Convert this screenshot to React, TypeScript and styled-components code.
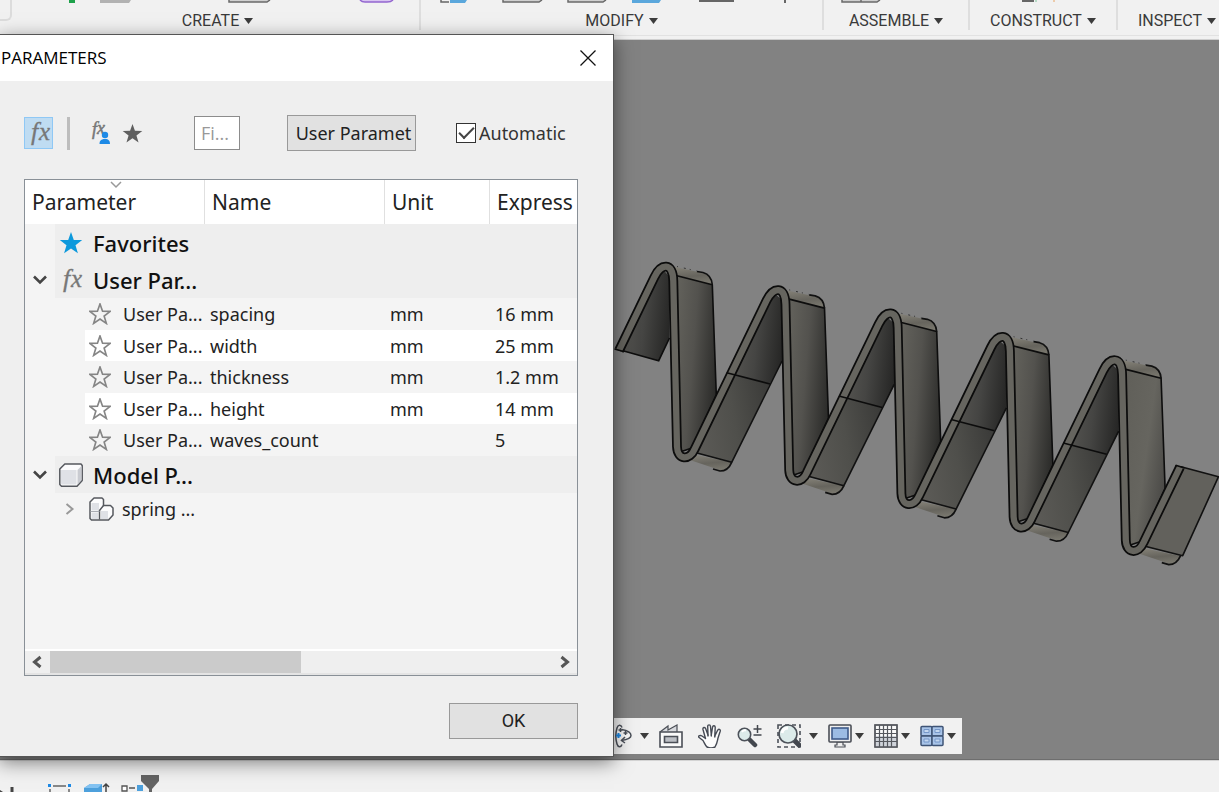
import React from "react";
import styled, { createGlobalStyle } from "styled-components";

const Global = createGlobalStyle`
  *, *::before, *::after { box-sizing: border-box; }
  body { margin: 0; background: #f1f1f1; font-family: "Noto Sans", "Open Sans", sans-serif; overflow: hidden; }
  button, input { font: inherit; margin: 0; }
  svg { display: block; flex: none; }
`;

const Page = styled.div`
  position: relative;
  display: flex;
  flex-direction: column;
  height: 100vh;
  overflow: hidden;
`;

/* ---------- ribbon ---------- */
const Ribbon = styled.header`
  display: flex;
  flex: none;
  height: 40px;
  overflow: hidden;
  background: #f1f1f1;
  border-bottom: 1px solid #cfcfcf;
  box-shadow: inset 0 -3px 0 #f1f1f1, inset 0 -4px 0 #e2e2e2;
`;
const RibbonStart = styled.div`
  flex: none;
  width: 12px;
  height: 21px;
  margin-right: 4px;
  border: solid #dcdcdc;
  border-width: 0 2px 2px 0;
  border-radius: 0 0 6px 0;
`;
const Group = styled.section<{ $width: number }>`
  display: flex;
  flex-direction: column;
  align-items: center;
  flex: none;
  width: ${(p) => p.$width}px;
  height: 30px;
  border-right: 2px solid #dedede;
`;
const GroupButton = styled.button`
  display: flex;
  align-items: center;
  gap: 5px;
  margin-top: 7px;
  padding: 0;
  border: 0;
  background: none;
  font: 16px/20px Roboto, sans-serif;
  color: #3a3a3a;
  white-space: nowrap;
`;
const Caret = () => (
  <svg width="9" height="8" viewBox="0 0 9 8" aria-hidden="true">
    <path d="M0 1h9L4.500 7z" fill="#3c3c3c" />
  </svg>
);

/* ---------- canvas ---------- */
const Viewport = styled.main`
  display: flex;
  flex-direction: column;
  justify-content: space-between;
  flex: 1;
  min-height: 0;
  background: #828282;
  border-bottom: 1px solid #6e6e6e;
`;
const ModelArea = styled.div`
  display: flex;
  justify-content: flex-end;
  padding-top: 210px;
`;
const NavBar = styled.nav`
  display: flex;
  align-items: center;
  justify-content: flex-end;
  gap: 10px;
  width: 705px;
  height: 36px;
  margin: 0 auto 5px;
  padding-right: 6px;
  background: #f1f1f1;
`;
const NavButton = styled.button<{ $gap?: number; $plain?: boolean }>`
  display: flex;
  align-items: center;
  gap: ${(p) => p.$gap ?? 3}px;
  margin-right: ${(p) => (p.$plain ? 5 : 0)}px;
  padding: 0;
  border: 0;
  background: none;
`;

/* ---------- timeline ---------- */
const Timeline = styled.footer`
  display: flex;
  flex: none;
  height: 32px;
  overflow: hidden;
  background: #f1f1f1;
  border-top: 1px solid #d4d4d4;
`;

/* ---------- dialog ---------- */
const Dialog = styled.section`
  position: absolute;
  top: 34px;
  left: -1px;
  width: 615px;
  border: 1px solid #555;
  background: #efefef;
  box-shadow: 0 5px 18px rgba(0, 0, 0, 0.5);
`;
const TitleBar = styled.div`
  display: flex;
  align-items: center;
  justify-content: space-between;
  height: 46px;
  padding: 0 17px 0 1px;
  background: #fff;
`;
const Title = styled.h1`
  margin: 0;
  font: 400 17px/24px "Open Sans", sans-serif;
  color: #000;
`;
const IconButton = styled.button`
  display: flex;
  padding: 0;
  border: 0;
  background: none;
`;
const Body = styled.div`
  padding: 34px 35px 17px 24px;
`;
const Tools = styled.div`
  display: flex;
  align-items: center;
  height: 36px;
  margin-bottom: 28px;
`;
const FilterButton = styled(IconButton)<{ $active?: boolean }>`
  width: 29px;
  height: 32px;
  background: ${(p) => (p.$active ? "#bfdcf2" : "none")};
  border: 1px solid ${(p) => (p.$active ? "#8fc8f5" : "transparent")};
  align-items: center;
  justify-content: center;
  & + & { margin-left: 4px; }
`;
const Divider = styled.div`
  width: 3px;
  height: 33px;
  margin: 0 15px 0 14px;
  background: #bdbdbd;
`;
const FilterInput = styled.input`
  width: 46px;
  height: 34px;
  margin-left: 47px;
  padding: 0 6px;
  border: 1px solid #8c8c8c;
  background: #fff;
  font: 18px/24px "Open Sans", sans-serif;
  &::placeholder { color: #999; opacity: 1; }
`;
const PushButton = styled.button`
  width: 129px;
  height: 36px;
  padding: 0;
  border: 1px solid #999;
  background: #e1e1e1;
  color: #222;
  font-size: 18px;
  line-height: 24px;
  white-space: nowrap;
  overflow: hidden;
`;
const AddButton = styled(PushButton)`
  margin-left: 47px;
  padding-left: 4px;
`;
const OkButton = styled(PushButton)`
  font-family: Roboto, sans-serif;
`;
const CheckLabel = styled.label`
  display: flex;
  align-items: center;
  gap: 3px;
  margin-left: 40px;
  font-size: 18px;
  line-height: 24px;
  color: #333;
`;
const Check = styled.input`
  appearance: none;
  width: 20px;
  height: 20px;
  border: 1px solid #333;
  background: #fff;
  display: grid;
  place-items: center;
  &:checked::before {
    content: "";
    width: 15px;
    height: 8px;
    border: solid #444;
    border-width: 0 0 2px 2px;
    transform: translateY(-2px) rotate(-45deg);
  }
`;
const Frame = styled.div`
  display: flex;
  flex-direction: column;
  height: 497px;
  border: 1px solid #899097;
  background: #f4f4f4;
  overflow: hidden;
`;
const Table = styled.table`
  width: 100%;
  table-layout: fixed;
  border-collapse: separate;
  border-spacing: 0;
  color: #222;
`;
const HeadCell = styled.th`
  position: relative;
  height: 44px;
  padding: 0 0 0 7px;
  background: #fff;
  border-right: 1px solid #e0e0e0;
  font-size: 21px;
  line-height: 28px;
  font-weight: 400;
  text-align: left;
  white-space: nowrap;
  overflow: hidden;
  &:last-child { border-right: 0; }
`;
const SortMark = styled.svg`
  position: absolute;
  top: 1px;
  left: calc(50% - 5px);
`;
const GroupRow = styled.tr`
  height: 37px;
  background: linear-gradient(to right, #f4f4f4 30px, #eee 30px);
  font-size: 22px;
  line-height: 28px;
  font-weight: 500;
  color: #111;
`;
const ItemRow = styled.tr`
  height: 32px;
  font-size: 18px;
  line-height: 24px;
  &:nth-child(even) {
    height: 31px;
    background: linear-gradient(to right, #f4f4f4 60px, #fff 60px);
  }
`;
const Cell = styled.td`
  padding: 0 0 0 5px;
  white-space: nowrap;
`;
const TreeCell = styled.td<{ $indent: number }>`
  padding: 0 0 0 ${(p) => p.$indent}px;
  white-space: nowrap;
`;
const Tree = styled.div<{ $gap: number }>`
  display: flex;
  align-items: center;
  gap: ${(p) => p.$gap}px;
`;
const Slot = styled.span`
  display: flex;
  width: 16px;
`;
const ScrollBar = styled.div`
  display: flex;
  align-items: center;
  height: 26px;
  margin-top: auto;
  padding: 0 7px;
  gap: 8px;
  background: #efefef;
  border-top: 2px solid #fff;
  border-bottom: 2px solid #e4e4e4;
`;
const Track = styled.div`
  flex: 1;
  height: 22px;
`;
const Thumb = styled.div`
  width: 50%;
  height: 100%;
  background: #cbcbcb;
`;
const Actions = styled.div`
  display: flex;
  justify-content: flex-end;
  padding-top: 27px;
`;

/* ---------- icons ---------- */
const Fx = ({ color = "#777" }: { color?: string }) => (
  <svg width="24" height="28" viewBox="0 0 24 28" overflow="visible" fontFamily="Liberation Serif" fontStyle="italic" fill={color} stroke={color} strokeWidth="0.300" aria-hidden="true">
    <text x="4" y="21" fontSize="26">f</text>
    <text x="12" y="21" fontSize="25">x</text>
  </svg>
);
const starPath = "M12 1l2.800 7.900 8.400.2-6.700 5.100 2.400 8L12 17.400l-6.900 4.800 2.400-8L.8 9.100l8.400-.2z";
const Star = ({ size, color, outline }: { size: number; color: string; outline?: boolean }) => (
  <svg width={size} height={size} viewBox="0 0 24 24" aria-hidden="true">
    <path d={starPath} fill={outline ? "none" : color} stroke={outline ? color : "none"} strokeWidth="1.800" />
  </svg>
);
const Down = () => (
  <svg width="14" height="10" viewBox="0 0 14 10" fill="none" stroke="#444" strokeWidth="2.600" aria-hidden="true">
    <path d="M1 1.500l6 6 6-6" />
  </svg>
);
const Right = ({ flip, color, thick = 3 }: { flip?: boolean; color: string; thick?: number }) => (
  <svg width="10" height="14" viewBox="0 0 10 14" fill="none" stroke={color} strokeWidth={thick} aria-hidden="true">
    <path d={flip ? "M8.500 2L2.500 7l6 5" : "M1.500 2l6 5-6 5"} />
  </svg>
);
const Cube = () => (
  <svg width="24" height="24" viewBox="0 0 24 24" aria-hidden="true">
    <path d="M.8 6l5-5H22l1.200 1.500v15l-5.200 5.700H2.500L.8 21.500z" fill="#fcfcfd" stroke="#55585e" strokeWidth="1.500" strokeLinejoin="round" />
    <path d="M2 7h15.500v14.500H3L2 20.500z" fill="#dfe1e6" />
    <path d="M18.500 7L22.500 3v14l-4 4.500z" fill="#c9cbd1" />
  </svg>
);
const Body3d = () => (
  <svg width="25" height="24" viewBox="0 0 25 24" strokeLinejoin="round" aria-hidden="true">
    <path d="M1 5l4-4h8l1.500 1.500V8.500h7L24 11v7l-4.500 5H2.500L1 21.500z" fill="#fcfcfd" stroke="#55585e" strokeWidth="1.500" />
    <path d="M2.500 6H10v7.500H2.500zM2.500 15.500H9V22H2.500zM12 14h7v8h-7z" fill="#dfe1e6" />
    <path d="M10.500 22.500V13.500l4-5" fill="none" stroke="#55585e" strokeWidth="1.500" />
    <path d="M1.500 14.500h9" stroke="#a8abb2" />
  </svg>
);
const UserFx = () => (
  <svg width="24" height="26" viewBox="0 0 24 26" overflow="visible" fontFamily="Liberation Serif" fontStyle="italic" fill="#777" stroke="#777" strokeWidth="0.500" aria-hidden="true">
    <text x="4" y="15" fontSize="18">f</text>
    <text x="9" y="14" fontSize="18">x</text>
    <g stroke="none" fill="#1e8ae6">
      <circle cx="17" cy="15" r="3.200" />
      <path d="M11.500 24c0-4 2.500-4.500 4-5h3c2 .5 3.500 1.500 3.500 5z" />
    </g>
  </svg>
);
const Orbit = () => (
  <svg width="24" height="24" viewBox="0 0 24 24" fill="none" stroke="#4b5059" strokeWidth="1.500" aria-hidden="true">
    <path d="M3 9h3M3 14h3" />
    <path d="M14 3.500C13 .5 10 .5 9 4c-1.500 5-1.500 11 0 16 1 3.500 4 3.500 5 .5M13.500 5.500C20 6.500 23 9 23 11.500S20 15.500 13.500 16.500" fill="#fafafa" />
    <path d="M17 13l-3.500 3.500L17 19" />
    <path d="M10.500 6h4M12.500 4v4M15.500 9h4M17.500 7v4" />
    <path d="M8 11.500h5M10.500 9v5" stroke="#1e8ae6" strokeWidth="2" />
  </svg>
);
const LookAt = () => (
  <svg width="24" height="24" viewBox="0 0 24 24" stroke="#4b4f57" strokeWidth="1.600" aria-hidden="true">
    <path d="M1 8l8-6v4l9-5v7" fill="#d8dade" strokeWidth="1.200" />
    <path d="M1 8h22v15H1z" fill="#fafafa" />
    <path d="M5.500 12.500h13v6h-13z" fill="#bcbfc5" />
  </svg>
);
const Hand = () => (
  <svg width="24" height="24" viewBox="0 0 24 24" fill="#fcfcfc" stroke="#454a54" strokeWidth="1.400" strokeLinejoin="round" strokeLinecap="round" aria-hidden="true">
    <path d="M9 23c-2-2-2.500-4-4-6.500L.8 13.200c-.8-1.800 1.700-2.200 3.200-1.200l3.500 2.500L5 5.500C4.500 3.300 7 2.700 7.700 4.700L10 11 9.700 2.500c0-2.200 2.600-2.200 2.800 0L13.300 11l1.300-8c.4-2 2.700-1.600 2.600.5L16.800 12l2.700-5.500c1-2 3.300-1.200 2.700.8L20 14c-.7 3-.7 5-3 9-2 1-6 1-8 0z" />
    <path d="M10 11v1M13.300 11v1M16.800 12v1" />
  </svg>
);
const ZoomIcon = () => (
  <svg width="25" height="24" viewBox="0 0 25 24" fill="none" aria-hidden="true">
    <path d="M13 16l5 5" stroke="#43474e" strokeWidth="4.500" strokeLinecap="round" />
    <circle cx="7.500" cy="10.500" r="6.200" fill="#dcebea" stroke="#4d525a" strokeWidth="1.600" />
    <path d="M5 8c1-1.500 3-2 4-1.500" stroke="#fff" strokeWidth="2" />
    <path d="M16.500 5h8M20.500 1v8M16.500 11h8" stroke="#43474e" strokeWidth="1.500" />
  </svg>
);
const ZoomWindow = () => (
  <svg width="24" height="24" viewBox="0 0 24 24" fill="none" aria-hidden="true">
    <path d="M1 1h22v22H1z" stroke="#4d525a" strokeWidth="1.600" strokeDasharray="4 3" />
    <path d="M17 16l5 5" stroke="#43474e" strokeWidth="5" strokeLinecap="round" />
    <circle cx="11" cy="10" r="9" fill="#dcebea" stroke="#4d525a" strokeWidth="1.700" />
    <path d="M5 9c.5-3 3-5 6-5" stroke="#fff" strokeWidth="3" />
  </svg>
);
const Monitor = () => (
  <svg width="24" height="24" viewBox="0 0 24 24" stroke="#4b4f57" strokeWidth="1.600" aria-hidden="true">
    <path d="M9 18h6v3h2v2H7v-2h2z" fill="#eee" strokeWidth="1.200" />
    <rect x="1" y="1" width="22" height="17" rx="1" fill="#efefef" />
    <rect x="4" y="4" width="16" height="11" fill="#9cbce4" stroke="#3f5b8a" />
  </svg>
);
const Grid = () => (
  <svg width="24" height="24" viewBox="0 0 24 24" fill="none" stroke="#55585e" aria-hidden="true">
    <rect x="1" y="1" width="22" height="22" fill="#fafafa" />
    <rect x="1" y="12" width="22" height="11" fill="#cfd3da" stroke="none" />
    <rect x="1" y="1" width="22" height="22" strokeWidth="1.600" />
    <path d="M5.500 1v22M9.500 1v22M13.500 1v22M17.500 1v22M1 5.500h22M1 9.500h22M1 13.500h22M1 17.500h22" strokeWidth="1.200" />
  </svg>
);
const Quad = () => (
  <svg width="24" height="22" viewBox="0 0 24 22" fill="#a9c4e8" stroke="#3f5476" strokeWidth="1.500" aria-hidden="true">
    <rect x="1" y="1.500" width="11" height="9.500" rx="1" />
    <rect x="12" y="1.500" width="11" height="9.500" rx="1" />
    <rect x="1" y="11" width="11" height="9.500" rx="1" />
    <rect x="12" y="11" width="11" height="9.500" rx="1" />
    <path d="M4 4.500h5v3H4zM15 4.500h5v3h-5zM4 14h5v3H4zM15 14h5v3h-5z" fill="#c5d8f0" stroke="#7597c9" strokeWidth="1" />
  </svg>
);

/* Spring model: each wave repeats at a constant step along the axis. */
const stepX = 112.2;
const stepY = 23.4;
const waves = [0, 1, 2, 3, 4];
const pt = (n: number, x: number, y: number) => `${(x + n * stepX).toFixed(1)} ${(y + n * stepY).toFixed(1)}`;
const ribbonPath =
  "M619 350.500" +
  waves
    .map(
      (n) =>
        `L${pt(n, 654.3, 277.3)}C${pt(n, 661, 263)} ${pt(n, 673, 262)} ${pt(n, 673.3, 281)}` +
        `L${pt(n, 677, 446.7)}C${pt(n, 677.5, 460)} ${pt(n, 689.5, 461)} ${pt(n, 694.7, 449)}`
    )
    .join("") +
  "L1180 467";

const Spring = () => (
  <svg width="609" height="320" viewBox="610 250 609 320" role="img" aria-label="Wave spring model">
    <defs>
      <linearGradient id="face" x1="0" y1="0.200" x2="1" y2="0.550">
        <stop offset="0" stopColor="#62615b" />
        <stop offset="0.450" stopColor="#53524e" />
        <stop offset="1" stopColor="#2c2c2a" />
      </linearGradient>
      <linearGradient id="lastFace" x1="0" y1="0" x2="1" y2="0.600">
        <stop offset="0" stopColor="#605f59" />
        <stop offset="0.600" stopColor="#66655f" />
        <stop offset="1" stopColor="#4c4b48" />
      </linearGradient>
      <linearGradient id="inner" x1="0" y1="0.400" x2="1" y2="0.600">
        <stop offset="0" stopColor="#585753" />
        <stop offset="0.500" stopColor="#454543" />
        <stop offset="1" stopColor="#272726" />
      </linearGradient>
      <linearGradient id="lower" x1="0" y1="0.500" x2="1" y2="0.300">
        <stop offset="0" stopColor="#5b5a56" />
        <stop offset="0.500" stopColor="#4f4f4b" />
        <stop offset="1" stopColor="#3b3b39" />
      </linearGradient>
      <linearGradient id="cap" x1="0" y1="0" x2="0.250" y2="1">
        <stop offset="0" stopColor="#858278" />
        <stop offset="0.600" stopColor="#66645d" />
        <stop offset="1" stopColor="#77756c" />
      </linearGradient>
    </defs>
    <path d="M620 350L658.700 360.700 669.500 338V277L662 268z" fill="url(#inner)" />
    <path d="M622 350.600L658.700 360.700 669.500 338" fill="none" stroke="#0d0d0d" strokeWidth="1.600" />
    {waves.map((n) => (
      <g key={n} strokeLinejoin="round">
        <path d={`M${pt(n, 675, 267)}L${pt(n, 703, 273)}Q${pt(n, 712, 276)} ${pt(n, 712.3, 284.7)}L${pt(n, 677, 276)}z`} fill="url(#cap)" />
        <path d={`M${pt(n, 676, 275.5)}L${pt(n, 712.3, 284.7)} ${pt(n, 716.3, 395)} ${pt(n, 692, 448)} ${pt(n, 680, 452)}z`} fill={n === 4 ? "url(#lastFace)" : "url(#face)"} stroke="#0d0d0d" strokeWidth="1.600" />
        <path d={`M${pt(n, 697, 271.5)}L${pt(n, 703, 272.5)}Q${pt(n, 711.5, 275)} ${pt(n, 712.3, 284.7)}`} fill="none" stroke="#111" strokeWidth="1.700" />
        <path d={`M${pt(n, 677, 266.5)}L${pt(n, 697, 271)}`} stroke="#333" strokeWidth="1" strokeDasharray="1 6 2 4" />
        <path d={`M${pt(n, 696, 455)}L${pt(n, 731.7, 462.3)}Q${pt(n, 727, 470)} ${pt(n, 721, 470.5)}L${pt(n, 690, 460)}z`} fill="url(#cap)" />
        {n < 4 ? (
          <>
            <path d={`M${pt(n, 696, 453)}L${pt(n, 731.7, 462.3)} ${pt(n, 770, 384)} ${pt(n, 733, 373)}z`} fill="url(#lower)" />
            <path d={`M${pt(n, 732, 374)}L${pt(n, 770, 384)} ${pt(n, 782, 362)} ${pt(n, 782, 300)} ${pt(n, 773, 292)}z`} fill="url(#inner)" />
            <path d={`M${pt(n, 697, 453)}L${pt(n, 731.7, 462.3)} ${pt(n, 782, 361)}`} fill="none" stroke="#111" strokeWidth="1.600" />
          </>
        ) : (
          <path d="M1181 466.700L1218.500 476.700 1182.700 555.700 1144 546z" fill="#62615c" stroke="#111" strokeWidth="1.600" />
        )}
        <path d={`M${pt(n, 731.7, 462.3)}Q${pt(n, 728, 471)} ${pt(n, 720, 471)}L${pt(n, 713, 469)}`} fill="none" stroke="#111" strokeWidth="1.700" />
      </g>
    ))}
    <path d={ribbonPath} fill="none" stroke="#0c0c0c" strokeWidth="9.800" />
    <path d={ribbonPath} fill="none" stroke="#66655f" strokeWidth="6.300" />
    <path d="M614.500 349l9 2.500M1175.700 465.300l9 2.700" stroke="#0c0c0c" strokeWidth="1.600" />
    {waves.slice(0, 4).map((n) => (
      <path key={n} d={`M${pt(n, 726.7, 372.7)}L${pt(n, 770, 384)}`} stroke="#0c0c0c" strokeWidth="1.600" />
    ))}
  </svg>
);

/* Lower edges of the ribbon tool icons, one strip per group. */
const Strip = ({ x, width, children }: { x: number; width: number; children?: React.ReactNode }) => (
  <svg width={width} height="4" viewBox={`${x} 0 ${width} 4`} aria-hidden="true">
    {children}
  </svg>
);

const userParameters = [
  { name: "spacing", unit: "mm", expression: "16 mm" },
  { name: "width", unit: "mm", expression: "25 mm" },
  { name: "thickness", unit: "mm", expression: "1.2 mm" },
  { name: "height", unit: "mm", expression: "14 mm" },
  { name: "waves_count", unit: "", expression: "5" },
];

export default function App() {
  return (
    <Page>
      <Global />
      <Ribbon>
        <RibbonStart />
        <Group $width={405}>
          <Strip x={16} width={403}>
            <path d="M69 0h6v3h-6z" fill="#1ea14a" />
            <path d="M100 0h31l-2 3h-29z" fill="#b2b2b2" />
            <path d="M229 0v2h38l3-2" fill="#d0d0d0" stroke="#6a6a6a" strokeWidth="1.500" />
            <path d="M360 0q2 2 5 2h22q4 0 6-2" fill="#d9c5f2" stroke="#9366cf" strokeWidth="1.500" />
          </Strip>
          <GroupButton>CREATE <Caret /></GroupButton>
        </Group>
        <Group $width={403}>
          <Strip x={421} width={401}>
            <path d="M441 0v2h8" fill="none" stroke="#666" strokeWidth="1.500" />
            <path d="M450 0h17l-2 3h-15z" fill="#5aa7dc" />
            <path d="M503 0v2h36l3-2M568 0v2h35l3-2" fill="#d0d0d0" stroke="#6a6a6a" strokeWidth="1.500" />
            <path d="M632 0h29l-2 3h-27z" fill="#5aa7dc" />
            <path d="M699 1h35M785 0v3" stroke="#666" strokeWidth="2" />
          </Strip>
          <GroupButton>MODIFY <Caret /></GroupButton>
        </Group>
        <Group $width={146}>
          <Strip x={824} width={144}>
            <path d="M842 0v2h35l3-2M861 0v2" fill="#d0d0d0" stroke="#6a6a6a" strokeWidth="1.500" />
          </Strip>
          <GroupButton>ASSEMBLE <Caret /></GroupButton>
        </Group>
        <Group $width={148}>
          <Strip x={970} width={146}>
            <path d="M1022 1h12" stroke="#666" strokeWidth="2" />
            <path d="M1036 0v2" stroke="#7cc49a" />
            <path d="M1054 0v2" stroke="#e8a565" />
          </Strip>
          <GroupButton>CONSTRUCT <Caret /></GroupButton>
        </Group>
        <Group $width={120}>
          <Strip x={1118} width={118} />
          <GroupButton>INSPECT <Caret /></GroupButton>
        </Group>
      </Ribbon>

      <Viewport>
        <ModelArea>
          <Spring />
        </ModelArea>
        <NavBar aria-label="View controls">
          <NavButton $gap={8} aria-label="Orbit"><Orbit /><Caret /></NavButton>
          <NavButton $plain aria-label="Look at"><LookAt /></NavButton>
          <NavButton $plain aria-label="Pan"><Hand /></NavButton>
          <NavButton $plain aria-label="Zoom"><ZoomIcon /></NavButton>
          <NavButton $gap={8} aria-label="Zoom window"><ZoomWindow /><Caret /></NavButton>
          <NavButton aria-label="Display settings"><Monitor /><Caret /></NavButton>
          <NavButton aria-label="Grid"><Grid /><Caret /></NavButton>
          <NavButton aria-label="Viewports"><Quad /><Caret /></NavButton>
        </NavBar>
      </Viewport>

      <Timeline>
        <svg width="180" height="31" viewBox="0 761 180 31" aria-hidden="true">
          <path d="M12 787v5" stroke="#444" strokeWidth="3" />
          <path d="M0 790l3 2H0z" fill="#444" />
          <path d="M53 786h13M50 789v3M69 789v3" stroke="#666" strokeWidth="1.500" />
          <path d="M48 784h3v3h-3zM68 784h3v3h-3z" fill="#1e8ae6" />
          <path d="M84 788l6-4h12v8H84z" fill="#4da0dc" />
          <path d="M84 788l6-4h12l-4 4z" fill="#84c3f2" />
          <path d="M106 784v8M103 787l3-3 3 3" fill="none" stroke="#444" strokeWidth="1.500" />
          <path d="M122 786h5v5h-5z" fill="#fff" stroke="#555" strokeWidth="1.300" />
          <path d="M129 788h6" stroke="#555" strokeWidth="1.500" />
          <path d="M137 785h6v6h-6z" fill="#4da0dc" />
          <path d="M141 775h18v6l-7 8v3h-3v-3l-8-8z" fill="#646464" />
        </svg>
      </Timeline>

      <Dialog role="dialog" aria-labelledby="dialog-title">
        <TitleBar>
          <Title id="dialog-title">PARAMETERS</Title>
          <IconButton aria-label="Close">
            <svg width="16" height="16" viewBox="0 0 16 16" stroke="#111" strokeWidth="1.300" aria-hidden="true">
              <path d="M.5.5l15 15M15.500.5l-15 15" />
            </svg>
          </IconButton>
        </TitleBar>
        <Body>
          <Tools>
            <FilterButton $active aria-label="All parameters"><Fx /></FilterButton>
            <Divider />
            <FilterButton aria-label="User parameters"><UserFx /></FilterButton>
            <FilterButton aria-label="Favorites"><Star size={21} color="#5f5f5f" /></FilterButton>
            <FilterInput placeholder="Fi..." aria-label="Filter" />
            <AddButton>User Paramet</AddButton>
            <CheckLabel>
              <Check type="checkbox" defaultChecked />
              Automatic
            </CheckLabel>
          </Tools>
          <Frame>
            <Table>
              <colgroup>
                <col width="180" />
                <col width="180" />
                <col width="105" />
                <col />
              </colgroup>
              <thead>
                <tr>
                  <HeadCell>
                    Parameter
                    <SortMark width="12" height="8" viewBox="0 0 12 8" fill="none" stroke="#999" strokeWidth="1.500">
                      <path d="M1 1l5 5 5-5" />
                    </SortMark>
                  </HeadCell>
                  <HeadCell>Name</HeadCell>
                  <HeadCell>Unit</HeadCell>
                  <HeadCell>Express</HeadCell>
                </tr>
              </thead>
              <tbody>
                <GroupRow>
                  <TreeCell $indent={8} colSpan={4}>
                    <Tree $gap={10}><Slot /><Star size={24} color="#0d99dc" />Favorites</Tree>
                  </TreeCell>
                </GroupRow>
                <GroupRow>
                  <TreeCell $indent={8} colSpan={4}>
                    <Tree $gap={10}><Slot><Down /></Slot><Fx />User Par...</Tree>
                  </TreeCell>
                </GroupRow>
              </tbody>
              <tbody>
                {userParameters.map((p) => (
                  <ItemRow key={p.name}>
                    <TreeCell $indent={64}>
                      <Tree $gap={12}><Star size={22} color="#858585" outline />User Pa...</Tree>
                    </TreeCell>
                    <Cell>{p.name}</Cell>
                    <Cell>{p.unit}</Cell>
                    <Cell>{p.expression}</Cell>
                  </ItemRow>
                ))}
              </tbody>
              <tbody>
                <GroupRow>
                  <TreeCell $indent={8} colSpan={4}>
                    <Tree $gap={10}><Slot><Down /></Slot><Cube />Model P...</Tree>
                  </TreeCell>
                </GroupRow>
              </tbody>
              <tbody>
                <ItemRow>
                  <TreeCell $indent={40} colSpan={4}>
                    <Tree $gap={8}><Slot><Right color="#999" thick={2} /></Slot><Body3d />spring ...</Tree>
                  </TreeCell>
                </ItemRow>
              </tbody>
            </Table>
            <ScrollBar>
              <IconButton aria-label="Scroll left"><Right flip color="#555" /></IconButton>
              <Track><Thumb /></Track>
              <IconButton aria-label="Scroll right"><Right color="#555" /></IconButton>
            </ScrollBar>
          </Frame>
          <Actions>
            <OkButton>OK</OkButton>
          </Actions>
        </Body>
      </Dialog>
    </Page>
  );
}
